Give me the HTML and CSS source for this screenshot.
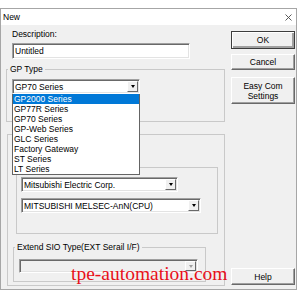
FILE: index.html
```html
<!doctype html>
<html lang="en">

<head>
    <meta charset="utf-8">
    <meta name="viewport" content="width=device-width, initial-scale=1">
    <title>New</title>
    <link rel="stylesheet" href="styles.css">
</head>

<body>
<div class="window">
    <div class="titlebar">
        <span>New</span>
        <svg class="close" width="7" height="7" viewBox="0 0 7 7" aria-hidden="true">
            <path d="M0.5 0.5 L6.5 6.5 M6.5 0.5 L0.5 6.5" stroke="#4a4a4a" stroke-width="0.9" fill="none"/>
        </svg>
    </div>

    <div class="dialog">
        <div class="fields">
            <label class="field">
                Description:
                <input class="edit" type="text" value="Untitled">
            </label>

            <fieldset class="group gp-type">
                <legend>GP Type</legend>
                <div class="combo-wrap">
                    <div class="combo gp-combo">
                        <span class="combo-text">GP70 Series</span>
                        <span class="combo-arrow"></span>
                    </div>
                    <ul class="droplist">
                        <li class="selected">GP2000 Series</li>
                        <li>GP77R Series</li>
                        <li>GP70 Series</li>
                        <li>GP-Web Series</li>
                        <li>GLC Series</li>
                        <li>Factory Gateway</li>
                        <li>ST Series</li>
                        <li>LT Series</li>
                    </ul>
                </div>
            </fieldset>

            <fieldset class="group plc">
                <fieldset class="group maker">
                    <div class="combo maker-combo">
                        <span class="combo-text">Mitsubishi Electric Corp.</span>
                        <span class="combo-arrow"></span>
                    </div>
                    <div class="combo model-combo">
                        <span class="combo-text">MITSUBISHI MELSEC-AnN(CPU)</span>
                        <span class="combo-arrow"></span>
                    </div>
                </fieldset>

                <fieldset class="group extend">
                    <legend>Extend SIO Type(EXT Serail I/F)</legend>
                    <div class="combo sio-combo disabled">
                        <span class="combo-text"></span>
                        <span class="combo-arrow"></span>
                    </div>
                </fieldset>
            </fieldset>
        </div>

        <div class="buttons">
            <button type="button" class="button button-default ok">OK</button>
            <button type="button" class="button cancel">Cancel</button>
            <button type="button" class="button easycom">Easy Com<br>Settings</button>
            <button type="button" class="button help">Help</button>
        </div>
    </div>

    <div class="watermark">tpe-automation.com</div>
</div>
</body>
</html>
```

FILE: styles.css
```css
:root {
    /* Colors */
    --color-page: #fff;
    --color-face: #f0f0f0;
    --color-frame: #a6a6a6;
    --color-etch: #c9c9c9;
    --color-shadow: #a0a0a0;
    --color-dark: #696969;
    --color-light: #e3e3e3;
    --color-highlight: #0078d7;
    --color-watermark: #e8101a;

    /* Typography */
    --font-ui: "Liberation Sans", Arial, sans-serif;
    --font-mark: "Liberation Serif", "Times New Roman", serif;
}

*, *::before, *::after {
    box-sizing: border-box;
}

body {
    margin: 0;
    background: var(--color-page);
    font-family: var(--font-ui);
    font-size: 8.5px;
    line-height: 10px;
    color: #000;
}

.window {
    position: relative;
    display: flex;
    flex-direction: column;
    width: 297px;
    height: 282px;
    margin-top: 8px;
    border: 1px solid var(--color-frame);
    background: var(--color-face);
}

.titlebar {
    display: flex;
    align-items: center;
    justify-content: space-between;
    height: 16px;
    padding: 0 4px 0 2px;
    background: #fff;
}

.dialog {
    flex: 1;
    display: grid;
    grid-template-columns: 219px 64px;
    column-gap: 6px;
    padding: 0 1px 0 5px;
}

.fields {
    display: flex;
    flex-direction: column;
    align-items: flex-start;
}

.field {
    display: flex;
    flex-direction: column;
    gap: 4px;
    margin: 4px 0 0 6px;
}

/* sunken edit and combo fields */
.edit,
.combo {
    background: #fff;
    border: 1px solid;
    border-color: var(--color-shadow) #fff #fff var(--color-shadow);
    box-shadow: inset 1px 1px var(--color-dark), inset -1px -1px var(--color-light);
}

.edit {
    width: 178px;
    height: 16px;
    padding: 0 2px;
    font: inherit;
    color: #000;
    outline: none;
}

.group {
    min-width: 0;
    margin: 0;
    border: 1px solid var(--color-etch);
}

.group legend {
    margin-left: -4px;
    padding: 0 2px;
    line-height: 10px;
}

.gp-type {
    width: 219px;
    margin-top: 5px;
    padding: 5px 0 27px 5px;
}

.plc {
    width: 218px;
    margin: 12px 0 0 1px;
    padding: 32px 0 3px 5px;
}

.maker {
    display: flex;
    flex-direction: column;
    gap: 6px;
    width: 202px;
    margin-left: 3px;
    padding: 9px 0 20px 4px;
}

.extend {
    width: 193px;
    margin-top: 8px;
    padding: 7px 0 8px 5px;
}

.combo {
    display: flex;
    align-items: center;
    height: 15px;
    padding: 1px;
}

.combo-text {
    flex: 1;
    padding-left: 1px;
    white-space: nowrap;
    overflow: hidden;
}

.combo-arrow {
    display: flex;
    align-items: center;
    justify-content: center;
    width: 11px;
    height: 100%;
    background: var(--color-face);
    border: 1px solid;
    border-color: #fff var(--color-dark) var(--color-dark) #fff;
}

.combo-arrow::after {
    content: "";
    border-top: 3px solid #000;
    border-left: 2.5px solid transparent;
    border-right: 2.5px solid transparent;
}

.combo-wrap {
    position: relative;
    width: 128px;
}

.gp-combo {
    width: 128px;
}

.maker-combo {
    width: 157px;
}

.model-combo {
    width: 180px;
}

.sio-combo {
    width: 179px;
    height: 14px;
}

.combo.disabled {
    background: var(--color-face);
}

.combo.disabled .combo-arrow::after {
    border-top-color: var(--color-shadow);
}

.droplist {
    position: absolute;
    top: 100%;
    left: 0;
    z-index: 2;
    width: 100%;
    margin: 0;
    padding: 0;
    list-style: none;
    background: #fff;
    border: 1px solid #646464;
    border-top: 0;
}

.droplist li {
    height: 10px;
    padding-left: 1px;
    white-space: nowrap;
}

.droplist .selected {
    background: var(--color-highlight);
    color: #fff;
}

.buttons {
    display: flex;
    flex-direction: column;
    padding: 6px 0 4px;
}

.button {
    padding: 0;
    font: inherit;
    color: #000;
    background: var(--color-face);
    border: 1px solid;
    border-color: #fff var(--color-dark) var(--color-dark) #fff;
    box-shadow: inset -1px -1px var(--color-shadow);
}

.button-default {
    border-color: #3c3c3c;
    box-shadow: inset 1px 1px #fff, inset -2px -2px var(--color-shadow);
}

.ok {
    height: 18px;
}

.cancel {
    height: 16px;
    margin-top: 5px;
}

.easycom {
    height: 27px;
    margin-top: 7px;
}

.help {
    height: 17px;
    margin-top: auto;
}

.watermark {
    position: absolute;
    top: 255px;
    left: 70px;
    font-family: var(--font-mark);
    font-size: 19.5px;
    line-height: 1;
    color: var(--color-watermark);
    white-space: nowrap;
}
```
